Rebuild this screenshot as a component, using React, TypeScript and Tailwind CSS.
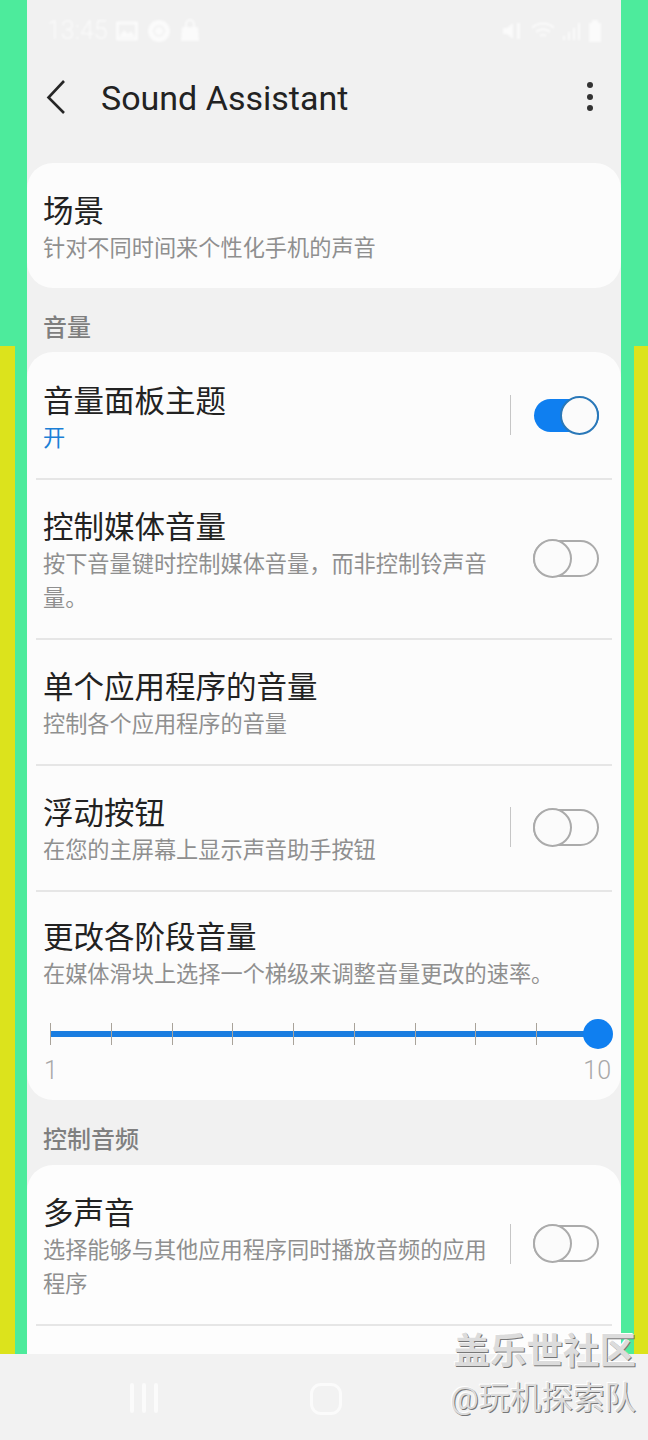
import React from "react";

const cjk = "font-['Roboto','Noto_Sans_CJK_SC',sans-serif]";

function Toggle({ on }: { on: boolean }) {
  if (on) {
    return (
      <div className="relative h-[33px] w-[65px] rounded-full bg-[#0f7ff0]">
        <div className="absolute right-0 top-[-3px] h-[39px] w-[39px] rounded-full border-2 border-[#2a78b8] bg-[#fbfbfb]" />
      </div>
    );
  }
  return (
    <div className="relative h-[37px] w-[66px] rounded-full border-2 border-[#ababab]">
      <div className="absolute left-[-2px] top-[-3px] h-[39px] w-[39px] rounded-full border-2 border-[#ababab] bg-[#fbfbfb]" />
    </div>
  );
}

function Row({
  title,
  sub,
  subBlue,
  h,
  pt,
  toggle,
  divider,
  last,
}: {
  title: string;
  sub: string;
  subBlue?: boolean;
  h: string;
  pt: string;
  toggle?: "on" | "off";
  divider?: boolean;
  last?: boolean;
}) {
  return (
    <div className={`relative flex shrink-0 pl-[16px] pr-[22px] ${h}`}>
      <div className={`min-w-0 flex-1 ${pt}`}>
        <div className="h-[36px] text-[30.5px] leading-[36px] text-[#222222]">{title}</div>
        <div
          className={`mt-[1px] w-[446px] text-[22.2px] leading-[34px] ${subBlue ? "text-[#1b7fd6]" : "text-[#8f8f8f]"}`}
        >
          {sub}
        </div>
      </div>
      {toggle && (
        <div
          className={`flex w-[89px] shrink-0 items-center justify-between ${toggle === "on" ? "pb-[2px]" : "pb-[4px]"}`}
        >
          {divider ? <div className="h-[40px] w-px bg-[#c6c6c6]" /> : <div />}
          <Toggle on={toggle === "on"} />
        </div>
      )}
      {!last && <div className="absolute bottom-0 left-[9px] right-[9px] h-[2px] bg-[#e6e6e6]" />}
    </div>
  );
}

function SideBar({ flip }: { flip?: boolean }) {
  return (
    <div className="flex w-[27px] shrink-0 flex-col">
      <div className="h-[346px] bg-[#4deb9c]" />
      <div className={`flex flex-1 ${flip ? "flex-row-reverse" : ""}`}>
        <div className={`bg-[#dce31c] ${flip ? "w-[14px]" : "w-[15px]"}`} />
        <div className="flex-1 bg-[#4deb9c]" />
      </div>
    </div>
  );
}

function SectionHead({ text, h }: { text: string; h: string }) {
  return (
    <div className={`flex items-center pl-[16px] pt-[16px] text-[24px] font-medium leading-[30px] text-[#7f7f7f] ${h}`}>
      {text}
    </div>
  );
}

export default function App() {
  return (
    <div className={`relative flex h-[1440px] w-[648px] flex-col overflow-hidden bg-[#f2f2f2] ${cjk}`}>
      <div className="flex h-[1354px] shrink-0">
        <SideBar />
        <div className="flex min-w-0 flex-1 flex-col overflow-hidden bg-[#f1f1f1]">
          {/* status bar */}
          <div className="flex h-[61px] shrink-0 items-center justify-between pl-[20px] pr-[19px] text-white blur-[0.8px]">
            <div className="flex items-center gap-[8px] opacity-70">
              <span className="text-[25px] font-light leading-[30px]">13:45</span>
              <svg width="22" height="22" viewBox="0 0 22 22" fill="none">
                <rect x="1.5" y="3" width="19" height="16" stroke="white" strokeWidth="3" />
                <path d="M3 17l5-7 4 4 3-3 4 6z" fill="white" />
              </svg>
              <svg width="26" height="26" viewBox="0 0 26 26">
                <circle cx="13" cy="13" r="11" fill="white" />
                <circle cx="13" cy="13" r="5" fill="none" stroke="#f1f1f1" strokeWidth="1.5" />
              </svg>
              <svg width="20" height="24" viewBox="0 0 20 24">
                <path d="M2 8h16l1 14H1z" fill="white" />
                <path d="M6 9V5a4 4 0 018 0v4" fill="none" stroke="white" strokeWidth="2" />
              </svg>
            </div>
            <div className="flex items-center gap-[6px] opacity-70">
              <svg width="22" height="22" viewBox="0 0 22 22" fill="white">
                <path d="M1 8h4l6-5v16l-6-5H1z" />
                <path d="M15 3v16h3V3z" />
              </svg>
              <svg width="26" height="22" viewBox="0 0 26 22" fill="none" stroke="white" strokeWidth="2">
                <path d="M2 8a16 16 0 0122 0" />
                <path d="M6 12a10 10 0 0114 0" />
                <path d="M10 16a4 4 0 016 0" />
              </svg>
              <svg width="20" height="22" viewBox="0 0 20 22" fill="white">
                <rect x="1" y="16" width="2" height="4" />
                <rect x="6" y="12" width="2" height="8" />
                <rect x="11" y="8" width="2" height="12" />
                <rect x="16" y="3" width="2" height="17" />
              </svg>
              <svg width="14" height="24" viewBox="0 0 14 24" fill="white">
                <path d="M4 1h6v3h3v19H1V4h3z" />
              </svg>
            </div>
          </div>

          {/* app bar */}
          <div className="flex h-[102px] shrink-0 items-start pl-[19px] pr-[28px]">
            <svg width="20" height="36" viewBox="0 0 20 36" className="mt-[17px] shrink-0" fill="none">
              <path d="M18 3L2.5 19.5 18 35" stroke="#262626" strokeWidth="2.6" />
            </svg>
            <div className="ml-[35px] mt-[14px] flex-1 text-[34px] leading-[46px] text-[#222222]">
              Sound Assistant
            </div>
            <div className="mt-[21px] flex flex-col gap-[5.5px]">
              <div className="h-[6px] w-[6px] rounded-full bg-[#333333]" />
              <div className="h-[6px] w-[6px] rounded-full bg-[#333333]" />
              <div className="h-[6px] w-[6px] rounded-full bg-[#333333]" />
            </div>
          </div>

          {/* cards */}
          <div className="shrink-0 overflow-hidden rounded-[26px] bg-[#fcfcfc]">
            <Row title="场景" sub="针对不同时间来个性化手机的声音" h="h-[125px]" pt="pt-[31px]" last />
          </div>

          <SectionHead text="音量" h="h-[64px]" />

          <div className="flex h-[748px] shrink-0 flex-col overflow-hidden rounded-[26px] bg-[#fcfcfc]">
            <Row title="音量面板主题" sub="开" subBlue h="h-[128px]" pt="pt-[32px]" toggle="on" divider />
            <Row
              title="控制媒体音量"
              sub="按下音量键时控制媒体音量，而非控制铃声音量。"
              h="h-[160px]"
              pt="pt-[30px]"
              toggle="off"
            />
            <Row title="单个应用程序的音量" sub="控制各个应用程序的音量" h="h-[126px]" pt="pt-[30px]" />
            <Row title="浮动按钮" sub="在您的主屏幕上显示声音助手按钮" h="h-[126px]" pt="pt-[30px]" toggle="off" divider />
            <div className="relative flex-1 pl-[16px] pr-[9px] pt-[28px]">
              <div className="h-[36px] text-[30.5px] leading-[36px] text-[#222222]">更改各阶段音量</div>
              <div className="mt-[1px] whitespace-nowrap text-[22.2px] leading-[34px] text-[#8f8f8f]">
                在媒体滑块上选择一个梯级来调整音量更改的速率。
              </div>
              {/* slider */}
              <div className="relative ml-[7px] mr-[14px] mt-[32px] flex h-[22px] justify-between">
                <div className="absolute left-0 right-0 top-[8px] h-[6px] bg-[#1a7de0]" />
                {[0, 1, 2, 3, 4, 5, 6, 7, 8, 9].map((i) => (
                  <div key={i} className={`relative w-px ${i === 9 ? "bg-transparent" : "bg-[#a9a39a]"}`} />
                ))}
                <div className="absolute right-[-15px] top-[-4px] h-[30px] w-[30px] rounded-full bg-[#0f7ff0]" />
              </div>
              <div className="mt-[11px] flex justify-between pl-[1px] pr-[1px] text-[25px] font-light leading-[30px] text-[#a8a8a8]">
                <span>1</span>
                <span>10</span>
              </div>
            </div>
          </div>

          <SectionHead text="控制音频" h="h-[63px] mb-[2px]" />

          <div className="flex-1 overflow-hidden rounded-t-[26px] bg-[#fdfdfd]">
            <Row
              title="多声音"
              sub="选择能够与其他应用程序同时播放音频的应用程序"
              h="h-[161px]"
              pt="pt-[31px]"
              toggle="off"
              divider
            />
          </div>
        </div>
        <SideBar flip />
      </div>

      {/* nav bar */}
      <div className="flex flex-1 items-start pt-[29px]">
        <div className="ml-[130px] flex h-[30px] w-[28px] justify-between">
          <div className="w-[4px] rounded-full bg-[#fbfbfb]" />
          <div className="w-[4px] rounded-full bg-[#fbfbfb]" />
          <div className="w-[4px] rounded-full bg-[#fbfbfb]" />
        </div>
        <div className="ml-[152px] h-[32px] w-[32px] rounded-[11px] border-[3px] border-[#fbfbfb]" />
      </div>

      {/* watermark */}
      <div className="absolute right-[12px] top-[1331px] flex flex-col items-end text-[#dcdcdc] [text-shadow:1px_1px_0_#777777,-1px_-1px_0_#ffffff]">
        <div className="text-[36.5px] font-bold leading-[42px]">盖乐世社区</div>
        <div className="mt-[5px] text-[31.5px] leading-[42px]">@玩机探索队</div>
      </div>
    </div>
  );
}
